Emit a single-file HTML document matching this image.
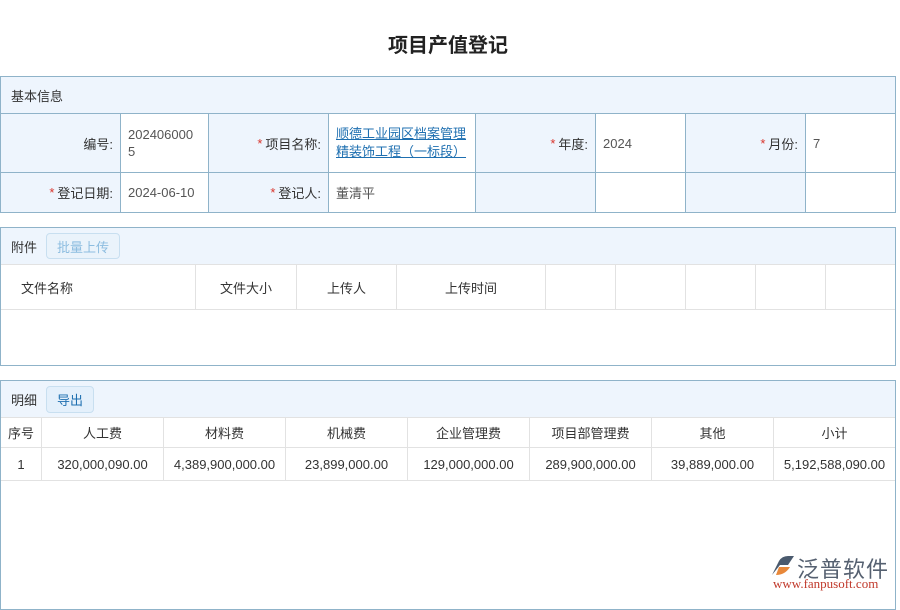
<!DOCTYPE html><html><head><meta charset="utf-8"><style>
*{margin:0;padding:0;box-sizing:border-box}
body{width:900px;height:600px;background:#fff;position:relative;overflow:hidden;font-family:"Liberation Sans","Noto Sans CJK SC",sans-serif;font-size:13px;color:#333}
.a{position:absolute}
.title{left:0;width:896px;top:29px;text-align:center;font-size:20px;font-weight:bold;color:#222}
.box{border:1px solid #8fb3c9;background:#fff}
.hd{background:#eef5fd;border-bottom:1px solid #8fb3c9;display:flex;align-items:center;padding:0 10px}
.c{position:absolute;display:flex;align-items:center;padding:0 7px;border-right:1px solid #8fb3c9;border-bottom:1px solid #8fb3c9}
.l{background:#eef5fd;justify-content:flex-end}
.s{color:#d9342b;margin-right:3px}
.t{position:absolute;display:flex;align-items:center;justify-content:center;border-right:1px solid #e2e2e2;border-bottom:1px solid #e2e2e2;color:#333}
.btn{position:absolute;border:1px solid #c8dff0;border-radius:4px;background:#e4f0fb;display:flex;align-items:center;justify-content:center}
</style></head><body>
<div class="a title">项目产值登记</div>

<div class="a box" style="left:0;top:76px;width:896px;height:137px">
<div class="a hd" style="left:0;top:0;width:894px;height:37px">基本信息</div>
<div class="c l" style="left:0;top:37px;width:120px;height:59px">编号:</div>
<div class="c" style="left:120px;top:37px;width:88px;height:59px;color:#555;line-height:17px">202406000<br>5</div>
<div class="c l" style="left:208px;top:37px;width:120px;height:59px"><span class="s">*</span>项目名称:</div>
<div class="c" style="left:328px;top:37px;width:147px;height:59px;color:#1e6fb0;text-decoration:underline;line-height:18px">顺德工业园区档案管理精装饰工程（一标段）</div>
<div class="c l" style="left:475px;top:37px;width:120px;height:59px"><span class="s">*</span>年度:</div>
<div class="c" style="left:595px;top:37px;width:90px;height:59px;color:#555">2024</div>
<div class="c l" style="left:685px;top:37px;width:120px;height:59px"><span class="s">*</span>月份:</div>
<div class="c" style="left:805px;top:37px;width:89px;height:59px;color:#555;border-right:none">7</div>
<div class="c l" style="left:0;top:96px;width:120px;height:39px;border-bottom:none"><span class="s">*</span>登记日期:</div>
<div class="c" style="left:120px;top:96px;width:88px;height:39px;color:#555;border-bottom:none">2024-06-10</div>
<div class="c l" style="left:208px;top:96px;width:120px;height:39px;border-bottom:none"><span class="s">*</span>登记人:</div>
<div class="c" style="left:328px;top:96px;width:147px;height:39px;color:#555;border-bottom:none">董清平</div>
<div class="c l" style="left:475px;top:96px;width:120px;height:39px;border-bottom:none"></div>
<div class="c" style="left:595px;top:96px;width:90px;height:39px;border-bottom:none"></div>
<div class="c l" style="left:685px;top:96px;width:120px;height:39px;border-bottom:none"></div>
</div>

<div class="a box" style="left:0;top:227px;width:896px;height:139px">
<div class="a hd" style="left:0;top:0;width:894px;height:37px;border-bottom-color:#e2e2e2">附件</div>
<div class="btn" style="left:45px;top:5px;width:74px;height:26px;color:#8dbde0;background:#eaf3fb">批量上传</div>
<div class="t" style="left:0;top:37px;width:195px;height:45px;justify-content:flex-start;padding-left:20px">文件名称</div>
<div class="t" style="left:195px;top:37px;width:101px;height:45px">文件大小</div>
<div class="t" style="left:296px;top:37px;width:100px;height:45px">上传人</div>
<div class="t" style="left:396px;top:37px;width:149px;height:45px">上传时间</div>
<div class="t" style="left:545px;top:37px;width:70px;height:45px"></div>
<div class="t" style="left:615px;top:37px;width:70px;height:45px"></div>
<div class="t" style="left:685px;top:37px;width:70px;height:45px"></div>
<div class="t" style="left:755px;top:37px;width:70px;height:45px"></div>
<div class="t" style="left:825px;top:37px;width:69px;height:45px;border-right:none"></div>
</div>

<div class="a box" style="left:0;top:380px;width:896px;height:230px">
<div class="a hd" style="left:0;top:0;width:894px;height:37px;border-bottom-color:#e2e2e2">明细</div>
<div class="btn" style="left:45px;top:5px;width:48px;height:27px;color:#1e6fb0">导出</div>
<div class="t" style="left:0;top:37px;width:41px;height:30px">序号</div>
<div class="t" style="left:41px;top:37px;width:122px;height:30px">人工费</div>
<div class="t" style="left:163px;top:37px;width:122px;height:30px">材料费</div>
<div class="t" style="left:285px;top:37px;width:122px;height:30px">机械费</div>
<div class="t" style="left:407px;top:37px;width:122px;height:30px">企业管理费</div>
<div class="t" style="left:529px;top:37px;width:122px;height:30px">项目部管理费</div>
<div class="t" style="left:651px;top:37px;width:122px;height:30px">其他</div>
<div class="t" style="left:773px;top:37px;width:121px;height:30px;border-right:none">小计</div>
<div class="t" style="left:0;top:67px;width:41px;height:33px">1</div>
<div class="t" style="left:41px;top:67px;width:122px;height:33px">320,000,090.00</div>
<div class="t" style="left:163px;top:67px;width:122px;height:33px">4,389,900,000.00</div>
<div class="t" style="left:285px;top:67px;width:122px;height:33px">23,899,000.00</div>
<div class="t" style="left:407px;top:67px;width:122px;height:33px">129,000,000.00</div>
<div class="t" style="left:529px;top:67px;width:122px;height:33px">289,900,000.00</div>
<div class="t" style="left:651px;top:67px;width:122px;height:33px">39,889,000.00</div>
<div class="t" style="left:773px;top:67px;width:121px;height:33px;border-right:none">5,192,588,090.00</div>
</div>

<svg class="a" style="left:770px;top:555px" width="26" height="22" viewBox="0 0 26 22"><path d="M2 20 L9 6 Q12 1 18 1 L24 1 L18 10 L10 10 Z" fill="#4a5a6e"/><path d="M9 12 L20 12 Q15 20 6 20 Z" fill="#e8883a"/></svg>
<div class="a" style="left:797px;top:552px;font-size:22px;color:#556070;letter-spacing:1px">泛普软件</div>
<div class="a" style="left:773px;top:576px;font-size:13px;color:#c0392b;font-family:'Liberation Serif',serif">www.fanpusoft.com</div>
</body></html>
